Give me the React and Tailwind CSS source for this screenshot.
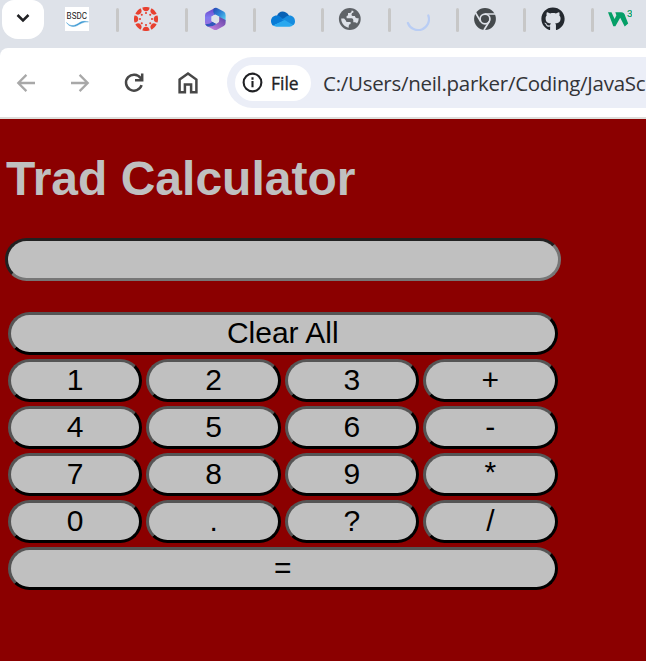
import React from 'react';
import { FaGithub } from 'react-icons/fa';

const Bsdc = () => (
  <svg viewBox="0 0 24 24" className="size-6">
    <rect width="24" height="24" fill="#fff" />
    <text x="1.6" y="11.9" fontSize="8.2" textLength="20.4" lengthAdjust="spacingAndGlyphs" fontFamily="Roboto, sans-serif" fill="#222">BSDC</text>
    <path d="M1.5 15.5C6 20.5 10 18.5 14 16S21 14.5 23.5 14.8C18 14.8 15 17 12 18.6S4 20 1.5 15.5Z" fill="#3f9bd3" stroke="#3f9bd3" strokeWidth=".4" />
  </svg>
);

const angles = [0, 45, 90, 135, 180, 225, 270, 315];
const Canvas = () => (
  <svg viewBox="0 0 24 24" className="size-6" fill="#e8402f">
    {angles.map((a) => (
      <g key={a} transform={`rotate(${a} 12 12)`}>
        <path d="M8.4 .5Q12-.6 15.6 .5Q15.2 4.3 12 4.3T8.4 .5Z" />
        <circle cx="12" cy="6" r="1.05" />
      </g>
    ))}
  </svg>
);

const Office = () => (
  <svg viewBox="0 0 24 24" className="size-6">
    <defs>
      <linearGradient id="oa" x1="0" y1="0" x2="0" y2="1"><stop stopColor="#6c3fc5" /><stop offset=".5" stopColor="#7f7af0" /><stop offset="1" stopColor="#a36ad8" /></linearGradient>
      <linearGradient id="ob" x1="0" y1="0" x2="1" y2="1"><stop stopColor="#2647b4" /><stop offset=".5" stopColor="#2e87d8" /><stop offset="1" stopColor="#5fd8f0" /></linearGradient>
      <linearGradient id="oc" x1="1" y1="0" x2="0" y2="1"><stop stopColor="#5b3fa5" /><stop offset="1" stopColor="#cf87e4" /></linearGradient>
    </defs>
    <path d="M12.5 .8 3.8 5.2Q2 6.2 2 8.4V15.8Q2 18 4 19L7 20.3 12 17.2 8.5 14V9.5L13 7Z" fill="url(#oa)" />
    <path d="M10.5 1.7Q12.8.2 15 1.4L21 4.8Q22.6 5.8 22.6 8V14.5L16 10.4 11.5 7.5Q9.5 5 10.5 1.7Z" fill="url(#ob)" />
    <path d="M16 9.8 22.6 13V16Q22.6 18 20.8 19L14.4 22.5Q12.4 23.5 10.4 22.5L4.5 19.3Q10 19.5 16 15Z" fill="url(#oc)" />
    <path d="M2.2 17.3Q3 18.6 4.5 19.4 9.3 20 13.5 16.9L9.5 14.7Q6.5 17.4 2.2 17.3Z" fill="#3157bd" />
    <path d="M12.4 7.4 16.2 9.5V14L12.4 16.2 8.6 14V9.5Z" fill="#dee2e9" />
  </svg>
);

const OneDrive = () => (
  <svg viewBox="0 0 24 24" className="size-6">
    <path d="M6 9C7.4 4.2 13.7 2.2 18.3 8.9L13.5 14.8Z" fill="#0861b5" />
    <path d="M5.8 8.6C2.3 8.6 0 11 0 14.2 0 16 .9 17.7 2.1 18.7L14.2 13.4 9.6 10.1C8.3 9 7.2 8.6 5.8 8.6Z" fill="#087bd6" />
    <path d="M18.5 8.5C16.8 8.5 15.6 9.2 14 10.4L10.4 12.8 21.8 18.3C23.3 17.4 24 16.1 24 14.4 24 11 21.8 8.5 18.5 8.5Z" fill="#168cdf" />
    <path d="M2.1 18.6 13.6 13 22.1 17.9Q20.7 19.7 18.5 19.7H5.6Q3.4 19.7 2.1 18.6Z" fill="#29a8ef" />
  </svg>
);

const Spinner = () => (
  <svg viewBox="0 0 24 24" className="size-6" fill="none" stroke="#b9cdf4" strokeWidth="2.2" strokeLinecap="round">
    <path d="M1.9 16A10.8 10.8 0 0 0 22.3 8.5" />
  </svg>
);

const Chrome = () => (
  <svg viewBox="0 0 24 24" className="size-6">
    <circle cx="12" cy="12" r="10.9" fill="#454a4d" />
    <circle cx="12" cy="12" r="4.9" fill="#454a4d" stroke="#dee2e9" strokeWidth="1.7" />
    <path d="M11.8 7H22.3M7.6 14.4 2.5 5.7M16.3 14.4 11 23" stroke="#dee2e9" strokeWidth="1.7" fill="none" />
  </svg>
);

const W3 = () => (
  <svg viewBox="0 0 24 24" className="size-6" fill="#059f67">
    <path d="M0 5.2H3.5L6.6 12 8.4 8.3 7.3 5.2H13.1Q16.5 5.4 17.3 9.2L20.2 16.6 16.7 19.5 12.2 10.8 7.4 19.3H5.3Z" />
    <text x="18.9" y="10.3" fontSize="9.8" fontFamily="Roboto, sans-serif" fontWeight="500">3</text>
  </svg>
);

const Globe = () => (
  <svg viewBox="0 0 24 24" className="size-6">
    <circle cx="11.8" cy="12" r="10.9" fill="#5f6368" />
    <path d="M13.6 3.4V4.2Q13.4 5.8 11.8 6H10V7.9Q9.8 9 8.6 9.1V11.3H13.6Q15.2 11.5 15.3 13V15.2H17Q18.6 15.4 19 16.6 20.8 14.2 20.7 11.2H18.9Q17 11 16.9 9.1H14.6Q13.4 8.8 13.5 7.4 13.7 5.8 15.4 5.6V4.1ZM3.2 11.6C3.1 16.2 6.6 20.2 10.7 20.7V19Q10.8 17.2 12.6 17V15.1H9.7Q7.8 15 7.7 13.2L6.1 11.6Z" fill="#dee2e9" />
  </svg>
);
const Github = () => <FaGithub className="size-6 text-[#24292f]" />;

const tabs = [Office, OneDrive, Globe, Spinner, Chrome, Github];
const Divider = () => <div className="h-6 w-[3px] shrink-0 rounded-sm bg-[#c7c7c7]" />;

const keys = ['Clear All', '1', '2', '3', '+', '4', '5', '6', '-', '7', '8', '9', '*', '0', '.', '?', '/', '='];

export default function App() {
  return (
    <div className="h-[661px] w-[646px] overflow-hidden bg-[#8b0000]">
      <div className="h-[119px] bg-[#dee2e9]">
        <div className="flex h-12 items-start">
          <button className="ml-0.5 flex h-[39px] w-[42px] shrink-0 items-center justify-center rounded-b-2xl rounded-t-xl bg-white">
            <svg viewBox="0 0 14 10" className="mt-[-3px] h-2.5 w-3.5" fill="none" stroke="#202124" strokeWidth="2.5"><path d="m1.5 2 5.5 5.5L12.5 2" /></svg>
          </button>
          <div className="ml-[21px] mt-1.5 flex shrink-0 items-center">
            <Bsdc /><div className="mt-0.5 ml-[27px] mr-[15px]"><Divider /></div>
            <Canvas /><div className="mt-0.5 ml-[27px] mr-[15px]"><Divider /></div>
            {tabs.map((Icon, i) => (
              <div key={i} className="flex w-[67.5px] shrink-0 items-center">
                <div className="flex size-6 shrink-0 items-center justify-center"><Icon /></div>
                <div className="mt-0.5 ml-[26px]"><Divider /></div>
              </div>
            ))}
            <W3 />
          </div>
        </div>
        <div className="flex h-[71px] items-center rounded-tl-lg border-b-2 border-[#dededb] bg-white">
          <svg viewBox="0 0 20 20" className="ml-4 size-5 shrink-0" fill="none" stroke="#a8a8a8" strokeWidth="2.3">
            <path d="M19 10H2.6M10.4 1.9 2.3 10l8.1 8.1" />
          </svg>
          <svg viewBox="0 0 20 20" className="ml-[34px] size-5 shrink-0" fill="none" stroke="#a8a8a8" strokeWidth="2.3">
            <path d="M1 10h16.4M9.6 1.9 17.7 10l-8.1 8.1" />
          </svg>
          <svg viewBox="0 0 22 22" className="ml-[33px] size-[22px] shrink-0" fill="none" stroke="#474747" strokeWidth="2.5">
            <path d="M18.6 13.2A8 8 0 1 1 17.6 6.1L19 7.8M19.2 1.5V8.2H12" />
          </svg>
          <svg viewBox="0 0 22 24" className="ml-8 h-6 w-[22px] shrink-0" fill="none" stroke="#474747" strokeWidth="2.5">
            <path d="M2.6 8.6 11 2.5 19.4 8.6V21.3H14.1V13.5H7.9V21.3H2.6Z" />
          </svg>
          <div className="ml-7 flex h-[51px] flex-1 items-center overflow-hidden rounded-l-full bg-[#ebeef7]">
            <div className="ml-2 flex h-9 w-[76px] shrink-0 items-center rounded-full bg-white">
              <svg viewBox="0 0 22 22" className="ml-[7px] size-[21px]" fill="none" stroke="#202124" strokeWidth="2.2">
                <circle cx="11" cy="11" r="9.3" /><path d="M11 9.5V16M11 5.6V8" />
              </svg>
              <span className="ml-2 font-['Open_Sans',sans-serif] text-[17.5px] font-medium leading-6 text-[#202124] [-webkit-text-stroke:0.3px_#202124]">File</span>
            </div>
            <span className="ml-3 whitespace-nowrap font-['Open_Sans',sans-serif] text-[20.5px] leading-7 tracking-[-0.28px] text-[#333438]">C:/Users/neil.parker/Coding/JavaSc</span>
          </div>
        </div>
      </div>
      <main className="font-['Liberation_Sans',Arial,sans-serif]">
        <h1 className="ml-1.5 mt-8 text-[48px] font-bold leading-[55px] text-[#c0c0c0]">Trad Calculator</h1>
        <div className="ml-[5px] mt-8 h-[43px] w-[556px] rounded-full border-3 border-b-[#767676] border-l-[#212121] border-r-[#767676] border-t-[#212121] bg-[#c0c0c0]" />
        <div className="ml-2 mt-[31px] grid w-[549.5px] grid-cols-4 gap-1">
          {keys.map((key) => (
            <button
              key={key}
              className={`flex h-[43px] items-center justify-center rounded-full border-3 border-b-black border-l-[#555] border-r-black border-t-[#555] bg-[#c0c0c0] text-[30px] leading-[35px] text-black ${key === '*' ? 'pb-1.5' : 'pb-0.5'} ${key.length > 1 || key === '=' ? 'col-span-4' : ''}`}
            >
              {key}
            </button>
          ))}
        </div>
      </main>
    </div>
  );
}
